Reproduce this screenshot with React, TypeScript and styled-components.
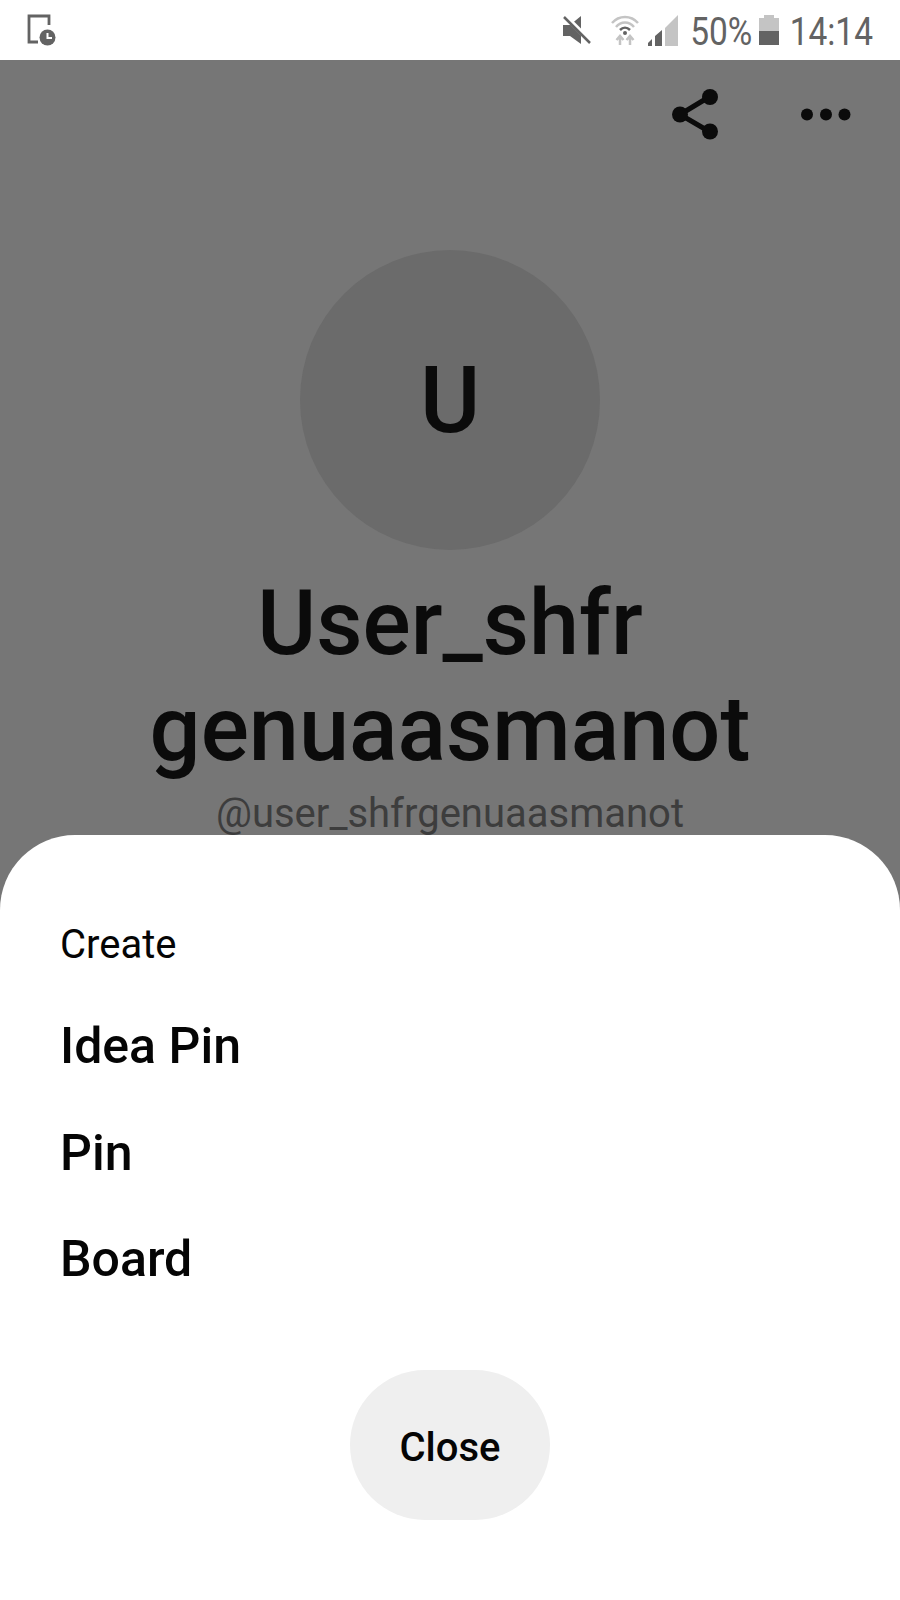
import React from "react";
import styled, { createGlobalStyle } from "styled-components";

const Global = createGlobalStyle`
  html, body { margin: 0; padding: 0; background: #fff; }
  body { font-family: Roboto, "Liberation Sans", sans-serif; }
`;

const Screen = styled.div`
  width: 900px;
  height: 1600px;
  display: flex;
  flex-direction: column;
  overflow: hidden;
  position: relative;
  background: #fff;
`;

const StatusBar = styled.header`
  height: 60px;
  flex: none;
  display: flex;
  align-items: center;
  justify-content: space-between;
  padding: 0 26px 0 27px;
  box-sizing: border-box;
  color: #636363;
`;

const StatusGroup = styled.div`
  display: flex;
  align-items: center;
`;

const StatusText = styled.span`
  font-size: 38px;
  line-height: 60px;
  padding-top: 4px;
  transform: scaleX(0.88);
  white-space: nowrap;
  margin: 0 -${(p: { $trim: number }) => p.$trim}px;
`;

const Profile = styled.section`
  flex: 1;
  background: #767676;
  display: flex;
  flex-direction: column;
  align-items: center;
`;

const ActionBar = styled.div`
  align-self: stretch;
  height: 190px;
  flex: none;
  display: flex;
  justify-content: flex-end;
  align-items: flex-start;
  gap: 81px;
  padding: 28px 49px 0 0;
  box-sizing: border-box;
`;

const Avatar = styled.div`
  width: 300px;
  height: 300px;
  flex: none;
  border-radius: 50%;
  background: #6b6b6b;
  color: #0b0b0b;
  display: flex;
  align-items: center;
  justify-content: center;
  font-size: 92px;
  font-weight: 500;
`;

const Name = styled.h1`
  margin: 21px 0 0;
  font-size: 90px;
  line-height: 106px;
  font-weight: 500;
  color: #0b0b0b;
  text-align: center;
`;

const Handle = styled.div`
  margin-top: 7px;
  font-size: 40px;
  line-height: 48px;
  color: #3d3d3d;
`;

/* Bottom sheet that slides up over the profile */
const Sheet = styled.section`
  position: absolute;
  left: 0;
  right: 0;
  bottom: 0;
  height: 765px;
  background: #fff;
  border-radius: 75px 75px 0 0;
  padding: 87px 60px 0;
  box-sizing: border-box;
  display: flex;
  flex-direction: column;
`;

const SheetTitle = styled.div`
  font-size: 40px;
  line-height: 46px;
  color: #050505;
`;

const MenuList = styled.div`
  margin-top: 49px;
  display: flex;
  flex-direction: column;
  gap: 48.5px;
`;

const MenuItem = styled.div`
  font-size: 50px;
  line-height: 58px;
  font-weight: 500;
  color: #050505;
`;

const CloseButton = styled.button`
  align-self: center;
  margin-top: 82px;
  width: 200px;
  height: 150px;
  padding: 4px 0 0;
  border: 0;
  border-radius: 75px;
  background: #efefef;
  color: #050505;
  font-family: inherit;
  font-size: 40px;
  font-weight: 500;
`;

const TabletClock = () => (
  <svg width="30" height="32" viewBox="0 0 30 32">
    <path d="M11 28H2V2H22V11" fill="none" stroke="#636363" strokeWidth="2.800" />
    <circle cx="20.500" cy="23.500" r="8" fill="#636363" />
    <path d="M20.500 19V24H25" fill="none" stroke="#fff" strokeWidth="2" />
  </svg>
);

const Muted = () => (
  <svg width="30" height="30" viewBox="0 0 30 30" style={{ marginRight: 19 }}>
    <path d="M1 10H8L19 1V29L8 21H1Z" fill="#636363" />
    <path d="M4 2L30 28" stroke="#fff" strokeWidth="5" />
    <path d="M2 2L28 28" stroke="#636363" strokeWidth="2.500" />
  </svg>
);

const Wifi = () => (
  <svg width="28" height="32" viewBox="0 0 28 32" style={{ marginRight: 9 }}>
    <path d="M1 9C8 1 20 1 27 9M5 13C10 7 18 7 23 13" fill="none" stroke="#c4c4c4" strokeWidth="2.500" />
    <path d="M9 16C12 13 16 13 19 16" fill="none" stroke="#636363" strokeWidth="2.500" />
    <circle cx="14" cy="19" r="2" fill="#636363" />
    <path d="M9 22V31M5.500 26L9 22L12.500 26M19 31V22M15.500 26L19 22L22.500 26" fill="none" stroke="#c4c4c4" strokeWidth="2.500" />
  </svg>
);

const Signal = () => (
  <svg width="30" height="31" viewBox="0 0 30 31" style={{ marginRight: 13 }}>
    <path d="M30 0V31H17V13Z" fill="#c4c4c4" />
    <path d="M0 31V28L4 24V31ZM7 31V21L14 15V31Z" fill="#636363" />
  </svg>
);

const Battery = () => (
  <svg width="20" height="30" viewBox="0 0 20 30" style={{ margin: "0 10px 0 8px" }}>
    <path d="M5 0H15V3H20V16H0V3H5Z" fill="#c4c4c4" />
    <rect x="0" y="16" width="20" height="14" fill="#636363" />
  </svg>
);

const ShareIcon = () => (
  <svg width="48" height="52" viewBox="0 0 48 52">
    <path d="M37 9L8 26.500L38 44" fill="none" stroke="#0b0b0b" strokeWidth="5" />
    <circle cx="38" cy="9" r="8" fill="#0b0b0b" />
    <circle cx="8" cy="26.500" r="8" fill="#0b0b0b" />
    <circle cx="38" cy="43.500" r="8" fill="#0b0b0b" />
  </svg>
);

const MoreIcon = () => (
  <svg width="50" height="52" viewBox="0 0 50 52">
    <circle cx="6" cy="26.500" r="6" fill="#0b0b0b" />
    <circle cx="25" cy="26.500" r="6" fill="#0b0b0b" />
    <circle cx="43.500" cy="26.500" r="6" fill="#0b0b0b" />
  </svg>
);

export default function App() {
  return (
    <Screen>
      <Global />
      <StatusBar>
        <StatusGroup>
          <TabletClock />
        </StatusGroup>
        <StatusGroup>
          <Muted />
          <Wifi />
          <Signal />
          <StatusText $trim={5}>50%</StatusText>
          <Battery />
          <StatusText $trim={5}>14:14</StatusText>
        </StatusGroup>
      </StatusBar>
      <Profile>
        <ActionBar>
          <ShareIcon />
          <MoreIcon />
        </ActionBar>
        <Avatar>U</Avatar>
        <Name>
          User_shfr
          <br />
          genuaasmanot
        </Name>
        <Handle>@user_shfrgenuaasmanot</Handle>
      </Profile>
      <Sheet>
        <SheetTitle>Create</SheetTitle>
        <MenuList>
          <MenuItem>Idea Pin</MenuItem>
          <MenuItem>Pin</MenuItem>
          <MenuItem>Board</MenuItem>
        </MenuList>
        <CloseButton>Close</CloseButton>
      </Sheet>
    </Screen>
  );
}
